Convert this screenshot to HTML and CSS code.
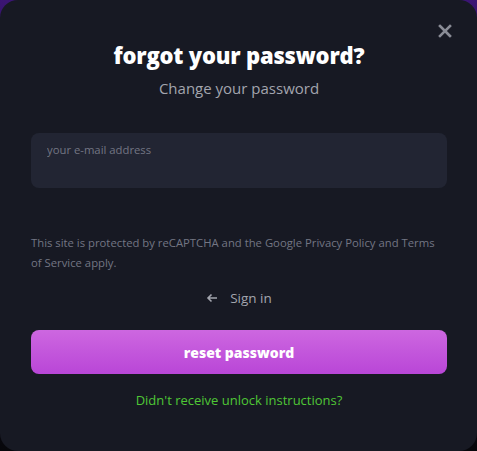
FILE: index.html
```html
<!DOCTYPE html>
<html lang="en">
<head>
    <title>Forgot password</title>
    <link rel="stylesheet" href="styles.css">
</head>
<body>
    <div class="modal">
        <button class="close-button" aria-label="Close">
            <svg width="14" height="14" viewBox="0 0 14 14">
                <path d="M2 2 L12 12 M12 2 L2 12" stroke="#8a8c96" stroke-width="2.6" stroke-linecap="square"/>
            </svg>
        </button>

        <h1>forgot your password?</h1>
        <p class="subtitle">Change your password</p>

        <form class="reset-form">
            <label class="inputbox">
                <input type="email" name="email" placeholder="your e-mail address">
            </label>

            <p class="recaptcha">This site is protected by reCAPTCHA and the Google Privacy Policy and Terms of Service apply.</p>

            <a class="back-link" href="#">
                <svg width="12" height="10" viewBox="0 0 12 10">
                    <path d="M11 5 H2 M5.5 1.5 L2 5 L5.5 8.5" stroke="#a3a5ae" stroke-width="1.6" fill="none"/>
                </svg>
                <span>Sign in</span>
            </a>

            <button type="submit" class="submit-button">reset password</button>
        </form>

        <a class="unlock-link" href="#">Didn't receive unlock instructions?</a>
    </div>
</body>
</html>
```

FILE: styles.css
```css
:root {
    --modal-bg: #171923;
    --input-bg: #222533;
    --muted-text: #737683;
    --light-text: #a3a5ae;
    --accent-green: #4fc736;
}

html, body {
    margin: 0;
    height: 100%;
}

body {
    background: linear-gradient(180deg, #3b1574 0%, #1a0f33 30%, #07070b 100%);
    font-family: 'Open Sans', Lato, sans-serif;
}

.modal {
    position: relative;
    box-sizing: border-box;
    height: 451px;
    background-color: var(--modal-bg);
    border-radius: 18px;
    padding: 40px 30px 0 31px;
    display: flex;
    flex-direction: column;
    align-items: center;
}

.close-button {
    position: absolute;
    top: 24px;
    right: 25px;
    background: none;
    border: none;
    padding: 0;
    cursor: pointer;
    line-height: 0;
}

h1 {
    margin: 0;
    color: #ffffff;
    font-size: 22px;
    font-weight: 800;
    line-height: 30px;
    letter-spacing: -0.2px;
}

.subtitle {
    margin: 8px 0 0;
    color: var(--light-text);
    font-size: 15px;
    font-weight: 500;
    line-height: 20px;
}

.reset-form {
    width: 100%;
    margin-top: 35px;
    display: flex;
    flex-direction: column;
}

.inputbox {
    display: block;
    height: 55px;
    background-color: var(--input-bg);
    border-radius: 8px;
    padding: 4px 16px 0;
    box-sizing: border-box;
}

.inputbox input {
    width: 100%;
    background: transparent;
    border: none;
    outline: none;
    padding: 0;
    font-family: inherit;
    font-size: 11.3px;
    font-weight: 500;
    color: #ffffff;
}

.inputbox input::placeholder {
    color: var(--muted-text);
}

.recaptcha {
    margin: 45px 0 0;
    color: var(--muted-text);
    font-size: 11.3px;
    font-weight: 500;
    line-height: 20px;
}

.back-link {
    margin-top: 15px;
    align-self: center;
    display: flex;
    align-items: center;
    gap: 12px;
    color: var(--light-text);
    font-size: 13.5px;
    font-weight: 500;
    line-height: 20px;
    text-decoration: none;
}

.submit-button {
    margin-top: 22px;
    height: 44px;
    border: none;
    border-radius: 8px;
    background: linear-gradient(180deg, #cd67e0 0%, #b946d7 100%);
    color: #ffffff;
    font-family: inherit;
    font-size: 14px;
    font-weight: 800;
    cursor: pointer;
}

.unlock-link {
    margin-top: 16px;
    color: var(--accent-green);
    font-size: 13px;
    font-weight: 500;
    line-height: 20px;
    text-decoration: none;
}
```
